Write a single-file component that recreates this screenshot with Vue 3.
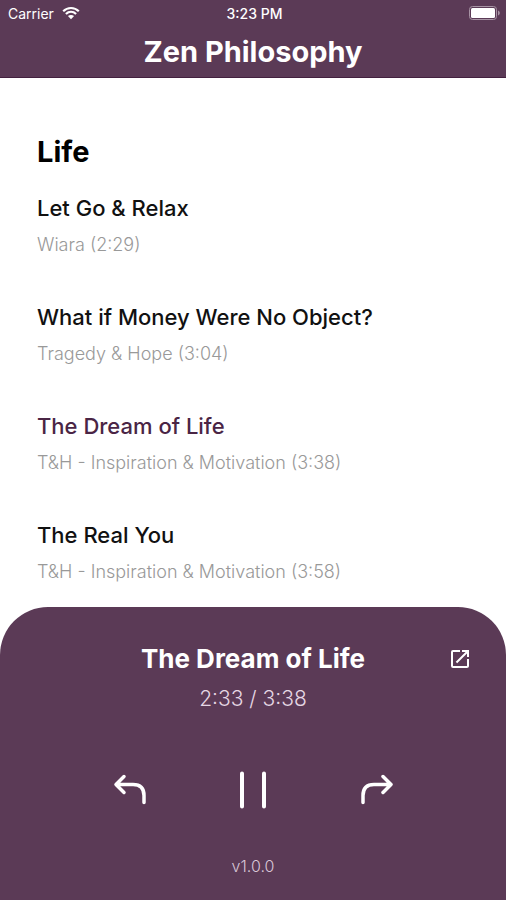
<script setup>
import { ref, computed } from 'vue'

const tracks = [
  { title: 'Let Go & Relax', artist: 'Wiara', length: '2:29' },
  { title: 'What if Money Were No Object?', artist: 'Tragedy & Hope', length: '3:04' },
  { title: 'The Dream of Life', artist: 'T&H - Inspiration & Motivation', length: '3:38' },
  { title: 'The Real You', artist: 'T&H - Inspiration & Motivation', length: '3:58' }
]
const current = ref(2)
const elapsed = ref('2:33')
const track = computed(() => tracks[current.value])

function select(index) {
  current.value = (index + tracks.length) % tracks.length
  elapsed.value = '0:00'
}
</script>

<template>
  <div class="app">
    <header class="header">
      <div class="status">
        <span class="carrier">
          Carrier
          <svg class="wifi" viewBox="0 0 18 14" aria-hidden="true">
            <path d="M1.2 5.2C5.6 0.9 12.4 0.9 16.8 5.2" />
            <path d="M3.9 8C6.9 5.2 11.1 5.2 14.1 8" />
            <path class="dot" d="M9 13.2 5.9 10.1C7.6 8.6 10.4 8.6 12.1 10.1Z" />
          </svg>
        </span>
        <span class="clock">3:23 PM</span>
        <svg class="battery" viewBox="0 0 32 14" aria-hidden="true">
          <rect class="shell" x="0.5" y="0.5" width="27" height="13" rx="3" />
          <rect class="charge" x="2" y="2" width="24" height="10" rx="1.5" />
          <path class="tip" d="M29 4.5C31.4 5.2 31.4 8.8 29 9.5Z" />
        </svg>
      </div>
      <h1>Zen Philosophy</h1>
    </header>

    <main class="content">
      <h2>Life</h2>
      <ul class="tracks">
        <li v-for="(item, index) in tracks" :key="item.title">
          <button class="track" :class="{ active: index === current }" @click="select(index)">
            <span class="name">{{ item.title }}</span>
            <span class="meta">{{ item.artist }} ({{ item.length }})</span>
          </button>
        </li>
      </ul>
    </main>

    <footer class="player">
      <div class="heading">
        <h3>{{ track.title }}</h3>
        <a class="open" href="#" aria-label="Open source">
          <svg viewBox="0 0 24 24" aria-hidden="true">
            <path d="M19 19H5V5h7V3H5a2 2 0 0 0-2 2v14a2 2 0 0 0 2 2h14c1.1 0 2-.9 2-2v-7h-2v7zM14 3v2h3.59l-9.83 9.83 1.41 1.41L19 6.41V10h2V3h-7z" />
          </svg>
        </a>
      </div>
      <p class="time">{{ elapsed }} / {{ track.length }}</p>
      <div class="controls">
        <button aria-label="Previous" @click="select(current - 1)">
          <svg class="turn" viewBox="0 0 34 32" aria-hidden="true">
            <path d="M11 2.5 3 10.5 11 18.5M3 10.5H20Q31 10.5 31 21.5V28.5" />
          </svg>
        </button>
        <button aria-label="Pause">
          <svg class="pause" viewBox="0 0 28 38" aria-hidden="true">
            <path d="M3 2.5V35.5M25 2.5V35.5" />
          </svg>
        </button>
        <button aria-label="Next" @click="select(current + 1)">
          <svg class="turn" viewBox="0 0 34 32" aria-hidden="true">
            <path d="M24 2.5 32 10.5 24 18.5M32 10.5H15Q4 10.5 4 21.5V28.5" />
          </svg>
        </button>
      </div>
      <p class="version">v1.0.0</p>
    </footer>
  </div>
</template>

<style>
body {
  margin: 0;
  background: #fff;
}
</style>

<style scoped>
.app {
  display: flex;
  flex-direction: column;
  height: 100vh;
  font-family: Inter, "Liberation Sans", sans-serif;
  color: #111;
}
h1, h2, h3, p, ul {
  margin: 0;
  padding: 0;
}
button {
  border: 0;
  padding: 0;
  background: none;
  color: inherit;
  font: inherit;
  cursor: pointer;
}
svg {
  display: block;
  fill: none;
}
.header {
  flex: none;
  background: #5b3a56;
  color: #fff;
  border-bottom: 1px solid #43203f;
}
.status {
  display: grid;
  grid-template-columns: 1fr auto 1fr;
  align-items: center;
  height: 26px;
  padding: 0 5px 0 8px;
  font-size: 14px;
}
.carrier {
  display: flex;
  align-items: center;
  gap: 8px;
}
.wifi {
  width: 18px;
  height: 14px;
  stroke: #fff;
  stroke-width: 2.2;
}
.wifi .dot {
  fill: #fff;
  stroke: none;
}
.clock {
  font-weight: 500;
}
.battery {
  justify-self: end;
  width: 32px;
  height: 14px;
}
.shell {
  stroke: #a793a4;
}
.charge {
  fill: #fff;
}
.tip {
  fill: #a793a4;
}
h1 {
  font-size: 29px;
  line-height: 51px;
  font-weight: 700;
  text-align: center;
}
.content {
  flex: 1;
  min-height: 0;
  overflow: hidden;
  padding: 54px 37px 0;
}
h2 {
  font-size: 29px;
  line-height: 40px;
  font-weight: 700;
  color: #000;
}
.tracks {
  display: flex;
  flex-direction: column;
  gap: 36px;
  padding-top: 18px;
  list-style: none;
}
.track {
  display: flex;
  flex-direction: column;
  gap: 1px;
  width: 100%;
  text-align: left;
}
.name {
  font-size: 22px;
  line-height: 36px;
  font-weight: 500;
}
.active .name {
  color: #4a2545;
}
.meta {
  font-size: 18px;
  line-height: 36px;
  font-weight: 300;
  color: #999;
}
.player {
  flex: none;
  padding: 32px 34px 22px;
  border-radius: 48px 48px 0 0;
  background: #5b3a56;
  color: #fff;
  text-align: center;
}
.heading {
  display: grid;
  grid-template-columns: 24px 1fr 24px;
  align-items: center;
}
h3 {
  grid-column: 2;
  font-size: 26px;
  line-height: 40px;
  font-weight: 700;
}
.open svg {
  width: 24px;
  height: 24px;
  fill: #fff;
}
.time {
  font-size: 21px;
  line-height: 40px;
  font-weight: 300;
  color: #e6d7e4;
}
.controls {
  display: flex;
  align-items: center;
  justify-content: space-between;
  padding: 52px 79px 45px;
}
.controls svg {
  stroke: #fff;
  stroke-width: 3.5;
  stroke-linecap: round;
  stroke-linejoin: round;
}
.turn {
  width: 34px;
  height: 32px;
}
.pause {
  width: 28px;
  height: 38px;
}
.controls .pause {
  stroke-width: 4;
}
.version {
  font-size: 16px;
  line-height: 24px;
  font-weight: 300;
  color: #d8c6d6;
}
</style>
